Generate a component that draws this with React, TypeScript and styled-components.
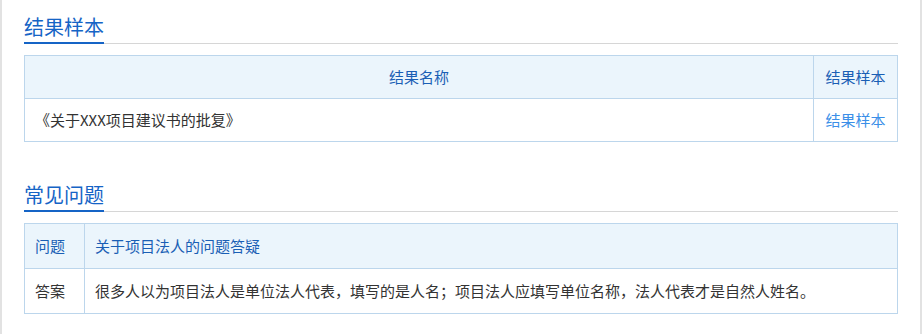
import React from "react";
import styled, { createGlobalStyle } from "styled-components";

const GlobalStyle = createGlobalStyle`
  html, body { margin: 0; padding: 0; background: #ffffff; }
  body {
    font-family: "Noto Sans CJK SC", "Noto Sans", sans-serif;
    color: #333333;
  }
`;

const Page = styled.div`
  box-sizing: border-box;
  width: 922px;
  min-height: 334px;
  border-left: 2px solid #e2e2e2;
  border-right: 2px solid #e2e2e2;
  padding: 0 22px;
`;

const Section = styled.section`
  padding-top: 12px;
  & + & {
    margin-top: 26px;
  }
`;

const TitleBar = styled.div`
  border-bottom: 1px solid #d6d6d6;
  height: 31px;
`;

const Title = styled.h2`
  display: inline-block;
  margin: 0;
  font-size: 20px;
  line-height: 30px;
  font-weight: 400;
  color: #1564c6;
  padding-bottom: 0;
  border-bottom: 2px solid #1564c6;
  vertical-align: top;
`;

const Table = styled.table`
  width: 100%;
  margin-top: 11px;
  border-collapse: collapse;
  table-layout: fixed;
  font-size: 15px;
`;

const HeadCell = styled.th<{ $align?: string; $pad: number }>`
  background: #ebf5fc;
  border: 1px solid #bcd6ec;
  color: #1a5fb5;
  font-weight: 400;
  line-height: 22px;
  padding: ${(p) => p.$pad}px 10px;
  text-align: ${(p) => p.$align || "left"};
`;

const Cell = styled.td<{ $align?: string; $pad: number; $link?: boolean }>`
  border: 1px solid #bcd6ec;
  color: ${(p) => (p.$link ? "#3b8fe8" : "#333333")};
  line-height: 22px;
  padding: ${(p) => p.$pad}px 10px;
  text-align: ${(p) => p.$align || "left"};
  cursor: ${(p) => (p.$link ? "pointer" : "default")};
`;

export default function App() {
  return (
    <>
      <GlobalStyle />
      <Page>
        <Section>
          <TitleBar>
            <Title>结果样本</Title>
          </TitleBar>
          <Table>
            <colgroup>
              <col />
              <col style={{ width: 84 }} />
            </colgroup>
            <thead>
              <tr>
                <HeadCell $align="center" $pad={10}>结果名称</HeadCell>
                <HeadCell $align="center" $pad={10}>结果样本</HeadCell>
              </tr>
            </thead>
            <tbody>
              <tr>
                <Cell $pad={10}>《关于XXX项目建议书的批复》</Cell>
                <Cell $pad={10} $align="center" $link>
                  结果样本
                </Cell>
              </tr>
            </tbody>
          </Table>
        </Section>
        <Section>
          <TitleBar>
            <Title>常见问题</Title>
          </TitleBar>
          <Table>
            <colgroup>
              <col style={{ width: 60 }} />
              <col />
            </colgroup>
            <thead>
              <tr>
                <HeadCell $pad={11}>问题</HeadCell>
                <HeadCell $pad={11}>关于项目法人的问题答疑</HeadCell>
              </tr>
            </thead>
            <tbody>
              <tr>
                <Cell $pad={11}>答案</Cell>
                <Cell $pad={11}>
                  很多人以为项目法人是单位法人代表，填写的是人名；项目法人应填写单位名称，法人代表才是自然人姓名。
                </Cell>
              </tr>
            </tbody>
          </Table>
        </Section>
      </Page>
    </>
  );
}
